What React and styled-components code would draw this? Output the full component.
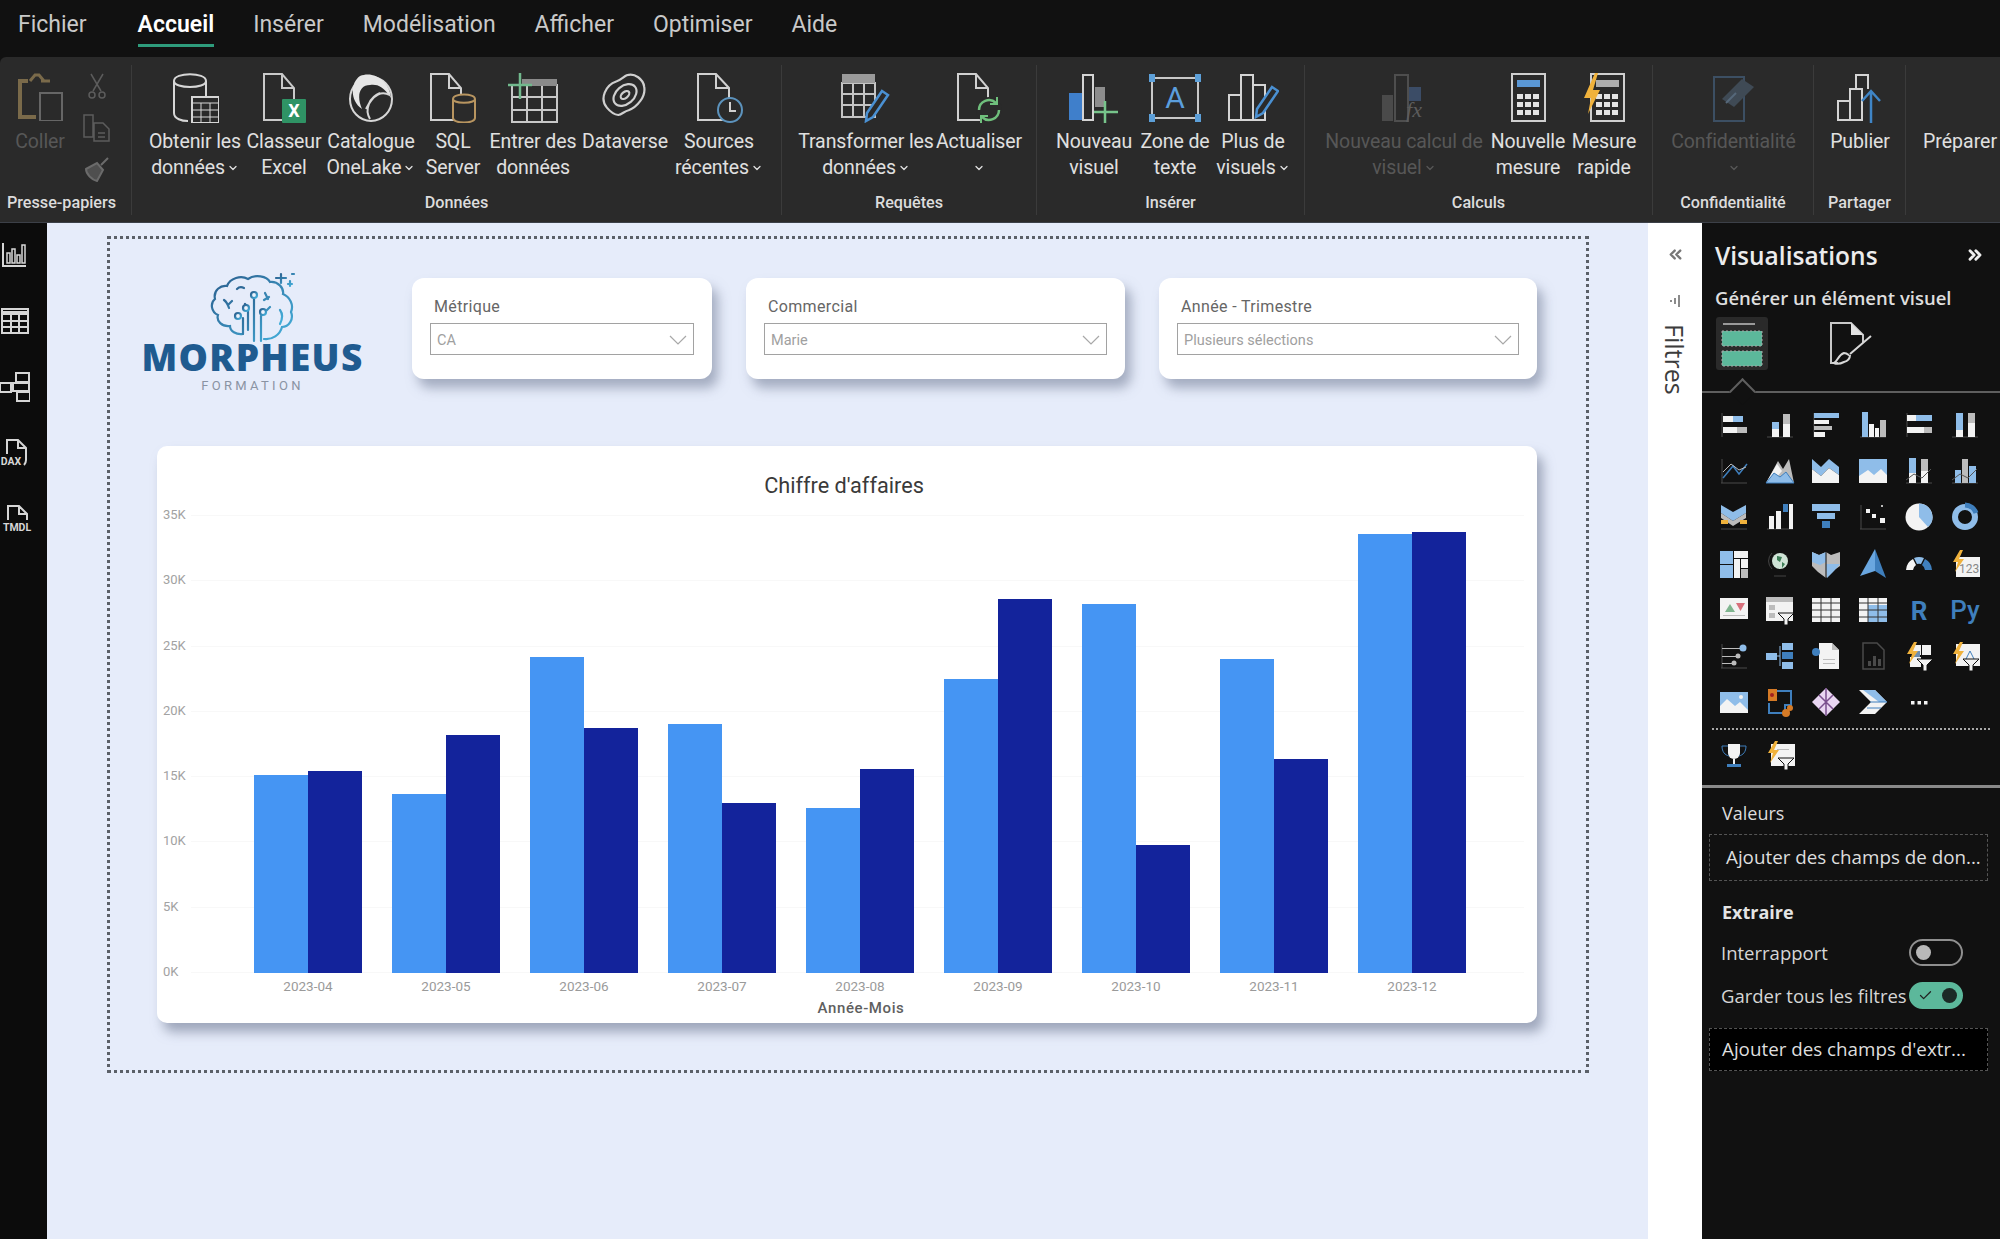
import styled, { createGlobalStyle } from "styled-components";
import { Check, ChevronDown, ChevronsLeft, ChevronsRight } from "lucide-react";

const W = "#f3f3f3";
const B = "#8fbde9";
const G = "#bcbcbc";
const D = "#3f7fbd";
const Y = "#f0b23c";
const L = "#d6d6d6";
const AX = "#4a4a4a";

const months = [
    { label: "2023-04", ca: 15150, prev: 15500 },
    { label: "2023-05", ca: 13700, prev: 18200 },
    { label: "2023-06", ca: 24200, prev: 18750 },
    { label: "2023-07", ca: 19060, prev: 13000 },
    { label: "2023-08", ca: 12600, prev: 15650 },
    { label: "2023-09", ca: 22500, prev: 28650 },
    { label: "2023-10", ca: 28250, prev: 9800 },
    { label: "2023-11", ca: 24050, prev: 16400 },
    { label: "2023-12", ca: 33600, prev: 33800 },
];
const ticks = ["35K", "30K", "25K", "20K", "15K", "10K", "5K", "0K"];
const PLOT_H = 457;

// petits helpers pour les icones
const b = (x, y, w, h, f) => <rect x={x} y={y} width={w} height={h} fill={f} />;
const axisL = <path d="M3 3v24" stroke={AX} fill="none" />;
const axisB = <path d="M2 27h26" stroke={AX} fill="none" />;
const bolt = <path d="M10 1 3 13h5l-3 10 9-13H9l4-9z" fill={Y} />;
const funnel = <path d="M13 18h16l-6 6v6h-4v-6z" fill={W} stroke="#111" strokeWidth="1" />;

const gridIcons = [
    <>{axisL}{b(4, 6, 10, 6, W)}{b(14, 6, 10, 6, B)}{b(4, 17, 14, 6, W)}{b(18, 17, 10, 6, G)}</>,
    <>{axisB}{b(7, 12, 7, 7, B)}{b(7, 19, 7, 8, W)}{b(18, 4, 7, 10, G)}{b(18, 14, 7, 13, W)}</>,
    <>{axisL}{b(3, 3, 25, 5, B)}{b(3, 10, 15, 4, W)}{b(3, 16, 18, 4, G)}{b(3, 22, 11, 5, W)}</>,
    <>{axisB}{b(4, 2, 6, 25, B)}{b(11, 14, 5, 13, W)}{b(17, 18, 4, 9, W)}{b(22, 10, 6, 17, G)}</>,
    <>{axisL}{b(3, 5, 9, 6, W)}{b(12, 5, 16, 6, B)}{b(3, 17, 17, 6, W)}{b(20, 17, 8, 6, G)}</>,
    <>{axisB}{b(6, 3, 7, 17, B)}{b(6, 20, 7, 7, W)}{b(18, 3, 7, 10, G)}{b(18, 13, 7, 14, W)}</>,
    <>{axisL}{axisB}<path d="M4 22 14 10l6 8 8-10" stroke={D} fill="none" strokeWidth="1.5" /><path d="M4 16l8-8 8 6 7-3" stroke={G} fill="none" /></>,
    <><path d="M1 27 13 5l5 8 6-10 5 24z" fill={G} /><path d="M1 27 12 8l5 7-5 6z" fill={W} /><path d="M1 27l8-10 6 4 6-5 8 11z" fill={B} stroke={D} /></>,
    <><path d="M1 3l9 8 8-8 10 8v8L18 12l-8 8-9-7z" fill={B} /><path d="M1 13l9 7 8-8 10 7v8H1z" fill={W} /></>,
    <>{b(1, 3, 28, 24, B)}<path d="M1 27v-7l9-6 6 5 7-6 6 6v8z" fill={W} /></>,
    <>{axisB}{b(5, 2, 7, 25, B)}{b(5, 17, 7, 10, W)}{b(17, 3, 7, 12, G)}{b(17, 15, 7, 12, W)}<path d="M2 24l8-6 8 4 9-9" stroke="#555" fill="none" /></>,
    <>{axisB}{b(5, 14, 6, 13, B)}{b(12, 3, 6, 24, G)}{b(19, 10, 7, 17, B)}<path d="M2 24l8-6 8 4 9-9" stroke="#555" fill="none" /></>,
    <>{axisB}<path d="M2 3l12 7 13-7v8l-13 8L2 11z" fill={B} /><path d="M2 11l12 8 13-8v5L14 24 2 16z" fill={G} />{b(2, 18, 7, 4, Y)}{b(21, 18, 7, 4, Y)}</>,
    <>{axisB}{b(4, 14, 5, 13, W)}{b(11, 9, 5, 18, W)}{b(18, 2, 5, 8, D)}{b(24, 2, 4, 25, W)}</>,
    <>{b(1, 2, 28, 7, B)}{b(6, 11, 18, 6, B)}{b(11, 19, 8, 7, D)}</>,
    <>{axisL}{axisB}{b(8, 7, 4, 4, W)}{b(14, 12, 4, 4, W)}{b(22, 16, 5, 5, W)}{b(23, 3, 2, 2, G)}</>,
    <><circle cx="15" cy="15" r="13.5" fill={W} /><path d="M15 15V1.5a13.5 13.5 0 0 1 9 23.5z" fill={B} /></>,
    <><circle cx="15" cy="15" r="10" fill="none" stroke={B} strokeWidth="6" /><path d="M15 3a12 12 0 0 1 11 8" fill="none" stroke={D} strokeWidth="5" /></>,
    <>{b(1, 2, 13, 13, B)}{b(1, 16, 13, 13, B)}{b(15, 2, 14, 7, W)}{b(15, 10, 6, 19, W)}{b(22, 10, 7, 9, W)}{b(22, 20, 7, 9, G)}</>,
    <><circle cx="15" cy="12" r="8" fill="#cfe3d6" /><path d="M12 7l5 1-2 5-3-2zM17 13l3 2-3 4z" fill="#3c7d55" /><path d="M7 4a11 11 0 0 0 0 16M9 27h12" stroke="#444" fill="none" /></>,
    <><path d="M1 3l7 3 7-3 5 3 9-3v14l-7 5-7 7-8-6-6-6z" fill={G} /><path d="M1 3l7 3 7-3v10l-6 3-8-3zM15 15l14 0-6 7-7 7z" fill={B} /><path d="M15 3v26" stroke="#111" /></>,
    <><path d="M17 0l11 29-11-7z" fill={D} /><path d="M17 0 2 27l15-5z" fill="#6aa7e0" /></>,
    <><path d="M2 21a13 13 0 0 1 7-11l3 6a7 7 0 0 0-3 5z" fill={W} /><path d="M10 9a13 13 0 0 1 10 0l-3 6a7 7 0 0 0-4 0z" fill={B} /><path d="M21 10a13 13 0 0 1 7 11h-7a7 7 0 0 0-3-5z" fill={D} /></>,
    <>{b(6, 8, 24, 20, W)}<text x="9" y="24" fontSize="12" fill="#888" fontFamily="Roboto, sans-serif">123</text>{bolt}</>,
    <>{b(1, 3, 28, 21, W)}<path d="M6 17l5-8 5 8z" fill="#7fb58f" /><path d="M17 8h9l-4.500 8z" fill="#d8707c" />{b(4, 20, 22, 1, G)}</>,
    <>{b(1, 2, 27, 24, W)}{b(1, 2, 27, 5, G)}{b(4, 10, 6, 5, G)}{b(4, 18, 6, 5, G)}{funnel}</>,
    <>{b(1, 3, 28, 24, W)}{[8, 15, 22].map((y) => <path key={y} d={`M1 ${y}h28`} stroke="#333" />)}{[10, 20].map((x) => <path key={x} d={`M${x} 3v24`} stroke="#333" />)}</>,
    <>{b(1, 3, 28, 24, W)}{b(10, 10, 19, 17, B)}{[8, 15, 22].map((y) => <path key={y} d={`M1 ${y}h28`} stroke="#333" />)}{[10, 20].map((x) => <path key={x} d={`M${x} 3v24`} stroke="#333" />)}</>,
    <text x="15" y="25" fontSize="26" fontWeight="700" textAnchor="middle" fill={D} fontFamily="Roboto, sans-serif">R</text>,
    <text x="15" y="24" fontSize="26" fontWeight="500" textAnchor="middle" fill={D} fontFamily="Roboto, sans-serif">Py</text>,
    <>{axisL}{b(3, 7, 18, 1, G)}{b(3, 15, 14, 1, G)}{b(3, 22, 10, 1, G)}<circle cx="24" cy="7" r="3.500" fill={B} /><circle cx="19" cy="15" r="2.500" fill={G} /><circle cx="15" cy="22" r="2.500" fill={G} />{axisB}</>,
    <>{b(1, 12, 11, 7, B)}{b(17, 2, 11, 7, B)}{b(17, 11, 11, 7, D)}{b(17, 21, 11, 7, B)}<path d="M12 15h3M15 5v20" stroke={B} fill="none" /></>,
    <><path d="M8 2h13l7 7v19H8z" fill={W} /><path d="M21 2v7h7" fill={G} /><circle cx="5" cy="11" r="4" fill={D} />{b(12, 18, 12, 1, G)}{b(12, 22, 12, 1, G)}</>,
    <><path d="M5 2h14l7 7v19H5z" fill="none" stroke="#4a4a4a" strokeWidth="1.5" />{b(10, 20, 3, 5, "#4a4a4a")}{b(15, 15, 3, 10, "#4a4a4a")}{b(20, 18, 3, 7, "#4a4a4a")}</>,
    <>{b(8, 4, 9, 10, W)}{b(18, 4, 9, 10, W)}{b(6, 16, 11, 10, W)}{b(8, 10, 8, 6, "#6d8db0")}{bolt}{funnel}</>,
    <>{b(6, 3, 24, 22, W)}<path d="M15 20l5-10 5 10" stroke={D} fill="none" />{bolt}{funnel}</>,
    <>{b(1, 5, 28, 21, B)}<path d="M1 26v-7l7-7 8 7 5-4 8 8v3z" fill={W} /><circle cx="22" cy="10" r="2" fill={W} /></>,
    <><path d="M3 2h9v12H3z" fill="#d57a26" /><circle cx="7" cy="8" r="2" fill="#a02020" /><path d="M12 4h14v14h-6v8H4V16" fill="none" stroke={D} strokeWidth="2" /><circle cx="25" cy="21" r="3" fill="#d57a26" /><circle cx="21" cy="26" r="4" fill="#d57a26" /></>,
    <><path d="M15 1l14 14-14 14L1 15z" fill="#e9d6f2" /><path d="M15 1v28M8 8l14 14M22 8 8 22" stroke="#7a4f8e" strokeWidth="1.500" /></>,
    <><path d="M1 3h16l12 12-12 12H1l12-12z" fill={W} /><path d="M5 3h12l12 12h-8z" fill={B} /><path d="M12 15h17M9 21h14" stroke={D} /></>,
    <>{b(7, 14, 3.5, 3.5, W)}{b(13.5, 14, 3.5, 3.5, W)}{b(20, 14, 3.5, 3.5, W)}</>,
];

const extraIcons = [
    <><path d="M9 4h12v9a6 6 0 0 1-12 0z" fill={W} /><path d="M9 6H3c0 6 3 9 7 10M21 6h6c0 6-3 9-7 10" fill="none" stroke={D} /><path d="M14 19h2v5h-2z" fill={W} /><path d="M8 24h14v3H8z" fill={D} /></>,
    <>{b(6, 4, 24, 22, W)}{b(12, 9, 12, 1, G)}{bolt}{funnel}</>,
];

function Svg({ w, h, vb, children }) {
    return (
        <svg width={w} height={h} viewBox={vb || `0 0 ${w} ${h}`} fill="none">
            {children}
        </svg>
    );
}

const textFont = "Roboto, sans-serif";

const ClipboardIcon = () => (
    <Svg w={46} h={48}>
        <path d="M11 8H3v36h16" stroke="#7a6a4a" strokeWidth="4" />
        <path d="M33 8h-9M13 8l5-6h4l5 6" stroke="#7a6a4a" strokeWidth="3" />
        <path d="M23 20h22v28H23z" stroke="#666" strokeWidth="2" fill="#2a2a2a" />
    </Svg>
);
const ScissorsIcon = () => (
    <Svg w={18} h={26}>
        <path d="M3 1l10 17M15 1 5 18" stroke="#5c5c5c" strokeWidth="1.500" />
        <circle cx="4" cy="22" r="3" stroke="#5c5c5c" strokeWidth="1.500" />
        <circle cx="14" cy="22" r="3" stroke="#5c5c5c" strokeWidth="1.500" />
    </Svg>
);
const CopyIcon = () => (
    <Svg w={27} h={28}>
        <path d="M1 1h9v22H1zM11 9h9l6 6v12H11zM15 19h7M15 23h7" stroke="#5c5c5c" strokeWidth="1.500" />
    </Svg>
);
const BrushIcon = () => (
    <Svg w={26} h={25}>
        <path d="M17 8 24 1M2 12l11-6 6 7-6 11c-5-1-11-7-11-12z" stroke="#6b6b6b" strokeWidth="2" fill="#4f4f4f" />
    </Svg>
);
const GetDataIcon = () => (
    <Svg w={47} h={50}>
        <path d="M2 8c0-9 32-9 32 0v18M2 8c0 8 32 8 32 0M2 8v32c0 6 8 8 14 8" stroke={L} strokeWidth="2" />
        <path d="M20 24h27v26H20z" fill="#2a2a2a" stroke={L} strokeWidth="2" />
        <path d="M20 30h27M29 30v20M38 30v20M20 37h27M20 44h27" stroke={L} />
    </Svg>
);
const ExcelIcon = () => (
    <Svg w={44} h={50}>
        <path d="M2 1h18l12 14v32H2zM20 1v14h12" stroke="#c9c9c9" strokeWidth="2" />
        <rect x="20" y="26" width="24" height="24" rx="1" fill="#2f9365" />
        <text x="32" y="44" fontSize="18" fontWeight="700" fill="#fff" textAnchor="middle" fontFamily={textFont}>X</text>
    </Svg>
);
const OneLakeIcon = () => (
    <Svg w={46} h={50}>
        <ellipse cx="23" cy="26" rx="21" ry="22" stroke={L} strokeWidth="2" />
        <path d="M12 3c14-6 30 6 31 22-8-12-14-14-21-13C12 12 8 22 14 36 2 28 2 10 12 3z" fill="#e6e6e6" />
        <path d="M18 36c8-16 16-18 24-14M22 46c-6-10 0-22 10-26" stroke={L} strokeWidth="2" />
    </Svg>
);
const SqlIcon = () => (
    <Svg w={48} h={50}>
        <path d="M2 1h18l12 14v32H2zM20 1v14h12" stroke="#d0d0d0" strokeWidth="2" />
        <path d="M24 26c0-6 22-6 22 0v19c0 6-22 6-22 0z" fill="#2a2a2a" stroke="#b89560" strokeWidth="2" />
        <path d="M24 26c0 5 22 5 22 0" stroke="#b89560" strokeWidth="2" />
    </Svg>
);
const EnterDataIcon = () => (
    <Svg w={50} h={50}>
        <path d="M4 12h45v37H4zM19 12v37M34 12v37M4 24h45M4 37h45" stroke="#c8c8c8" strokeWidth="2" />
        <path d="M14 6h35v7H14z" fill="#8a8a8a" />
        <path d="M12 0v26M0 12h24" stroke="#71b98d" strokeWidth="2.500" />
    </Svg>
);
const DataverseIcon = () => (
    <Svg w={48} h={44}>
        <g stroke="#cfcfcf" strokeWidth="2.200" transform="rotate(-40 24 22)">
            <path d="M2 20c0-12 14-18 24-14 4 2 8 1 12 2 8 3 10 14 6 20-5 9-19 11-27 8-4-2-8-1-11-3-3-3-4-8-4-13z" />
            <ellipse cx="24" cy="22" rx="13" ry="9" />
            <ellipse cx="24" cy="22" rx="5" ry="3" />
        </g>
    </Svg>
);
const RecentIcon = () => (
    <Svg w={47} h={50}>
        <path d="M2 1h18l13 14v32H2zM20 1v14h13" stroke="#d0d0d0" strokeWidth="2" />
        <circle cx="34" cy="37" r="12" fill="#2a2a2a" stroke="#5c93bd" strokeWidth="2" />
        <path d="M34 29v9h6" stroke="#d0d0d0" strokeWidth="2" />
    </Svg>
);
const pencil = (x, y) => (
    <path transform={`translate(${x} ${y})`} d="M17 0l6 4L8 26l-7 4 1-8z" fill="#2a2a2a" stroke="#4a90d2" strokeWidth="2.500" />
);
const TransformIcon = () => (
    <Svg w={50} h={50}>
        <path d="M1 10h33v34H1zM12 10v34M23 10v34M1 21h33M1 32h33" stroke="#c4c4c4" strokeWidth="2" />
        <path d="M1 1h33v9H1z" fill="#9a9a9a" />
        {pencil(24, 18)}
    </Svg>
);
const RefreshIcon = () => (
    <Svg w={46} h={50}>
        <path d="M2 1h18l12 14v32H2zM20 1v14h12" stroke="#d0d0d0" strokeWidth="2" />
        <circle cx="33" cy="37" r="13" fill="#2a2a2a" />
        <path d="M23 37a10 10 0 0 1 17-7M43 37a10 10 0 0 1-17 7" stroke="#6fbf7c" strokeWidth="2.500" />
        <path d="M41 24v7h-7M25 50v-7h7" stroke="#6fbf7c" strokeWidth="2" />
    </Svg>
);
const NewVisualIcon = () => (
    <Svg w={50} h={50}>
        <path d="M0 20h13v27H0z" fill="#3f7fcb" />
        <path d="M14 2h10v45H14z" stroke="#d4d4d4" strokeWidth="2" />
        <path d="M26 14h10v20H26z" fill="#8d8d8d" />
        <path d="M36 28v22M25 39h24" stroke="#77c48b" strokeWidth="2.500" />
    </Svg>
);
const TextBoxIcon = () => (
    <Svg w={54} h={50}>
        <path d="M4 5h46v40H4z" stroke="#c8c8c8" strokeWidth="2" />
        <path d="M1 1h6v8H1zM47 1h6v8h-6zM1 41h6v8H1zM47 41h6v8h-6z" fill="#5c9fd8" />
        <text x="27" y="35" fontSize="30" fill="#5b9edc" textAnchor="middle" fontFamily={textFont}>A</text>
    </Svg>
);
const MoreVisualsIcon = () => (
    <Svg w={51} h={50}>
        <path d="M1 22h12v25H1zM13 2h12v45H13zM25 12h12v35H25z" stroke="#d4d4d4" strokeWidth="2" fill="#2a2a2a" />
        {pencil(27, 14)}
    </Svg>
);
const NewCalcIcon = () => (
    <Svg w={46} h={50}>
        <path d="M1 22h11v26H1z" fill="#4a4a4a" />
        <path d="M14 2h13v46H14z" stroke="#4e4e4e" strokeWidth="2" />
        <path d="M28 14h12v14H28z" fill="#3b4c66" />
        <text x="33" y="44" fontSize="22" fontStyle="italic" fill="#5c5c5c" textAnchor="middle" fontFamily="Liberation Serif, serif">fx</text>
    </Svg>
);
const Calculator = ({ color, x = 1 }) => (
    <g transform={`translate(${x} 1)`}>
        <path d="M0 0h33v47H0z" stroke="#cfcfcf" strokeWidth="2" />
        <rect x="5" y="6" width="23" height="7" fill={color} />
        {[20, 28, 36].map((y) =>
            [5, 13, 21].map((c) => <rect key={`${y}-${c}`} x={c} y={y} width="6" height="5" fill="#e4e4e4" />)
        )}
    </g>
);
const MeasureIcon = () => (
    <Svg w={35} h={50}>
        <Calculator color="#5a97d5" />
    </Svg>
);
const QuickMeasureIcon = () => (
    <Svg w={42} h={50}>
        <Calculator color="#aeaeae" x={8} />
        <path d="M12 0 1 25h7L5 41l12-24h-7l5-17z" fill={Y} />
    </Svg>
);
const PrivacyIcon = () => (
    <Svg w={44} h={50}>
        <path d="M2 4h30v44H2z" stroke="#3c4f63" strokeWidth="2" />
        <path d="M10 26 30 6l12 8-20 20z" fill="#3f4a55" />
        <path d="M14 30l10-10" stroke="#56687a" strokeWidth="2" />
    </Svg>
);
const PublishIcon = () => (
    <Svg w={46} h={50}>
        <path d="M1 28h12v19H1zM13 16h12v31H13zM19 16V2h12v14" stroke="#d4d4d4" strokeWidth="2" />
        <path d="M34 50V18M25 28l9-10 9 10" stroke="#3f85c6" strokeWidth="2.500" />
    </Svg>
);

const railIcons = [
    <Svg w={30} h={26}>
        <path d="M3 1v23h23" stroke={L} strokeWidth="2" />
        <path d="M7 11h3v10H7zM12 7h3v14h-3zM17 13h3v8h-3zM22 3h3v18h-3z" stroke={L} strokeWidth="1.500" />
    </Svg>,
    <Svg w={30} h={26}>
        <rect x="2" y="1" width="26" height="24" stroke={L} strokeWidth="2" />
        <path d="M2 5h26" stroke={L} strokeWidth="4" />
        <path d="M2 13h26M2 19h26M11 7v18M19 7v18" stroke={L} strokeWidth="2" />
    </Svg>,
    <Svg w={30} h={30}>
        <path d="M0 11h11v9H0zM16 1h13v9H16zM13 11h16v8H13zM17 20h13v9H17zM11 15h2" stroke={L} strokeWidth="2" />
    </Svg>,
    <Svg w={30} h={28}>
        <path d="M7 15V1h11l8 8v12c0 2-1 4-2 5M18 1v8h8" stroke={L} strokeWidth="2" />
        <text x="11" y="26" fontSize="10.500" fontWeight="700" fill={L} textAnchor="middle" fontFamily={textFont}>DAX</text>
    </Svg>,
    <Svg w={34} h={28}>
        <path d="M8 15V1h11l8 8v6M19 1v8h8" stroke={L} strokeWidth="2" />
        <text x="17" y="26" fontSize="10.500" fontWeight="700" fill={L} textAnchor="middle" fontFamily={textFont}>TMDL</text>
    </Svg>,
];

const BrainLogo = () => (
    <svg width="86" height="72" viewBox="0 0 86 72" fill="none">
        <defs>
            <linearGradient id="brainStroke" x1="0" y1="0" x2="1" y2="1">
                <stop offset="0" stopColor="#2a5d8c" />
                <stop offset="1" stopColor="#45b0dc" />
            </linearGradient>
        </defs>
        <g stroke="url(#brainStroke)" strokeWidth="2.200" strokeLinecap="round">
            <path d="M33 62C26 63 20 59 20 54 12 55 6 49 8 43 1 40 0 31 5 27 3 18 11 13 17 14 20 6 31 3 38 7 45 2 57 4 60 10 68 9 74 16 73 22 80 25 84 33 81 40 84 47 79 55 72 55 70 63 62 68 54 67" />
            <path d="M14 28c3 2 4 5 5 8M18 33l4-4M27 17c2-2 5-2 7-1M59 25l-5 3M55 21l3 6M70 38c3 4 2 10 0 14" />
            <path d="M44 69V26M51 69V44M33 62V46M38 58V36l-3-4M51 44l9-9" />
            <circle cx="44" cy="23" r="3" fill="#eef3fc" />
            <circle cx="36" cy="36" r="3" fill="#eef3fc" />
            <circle cx="28" cy="44" r="3" fill="#eef3fc" />
            <circle cx="53" cy="40" r="3" fill="#eef3fc" />
            <path d="M71 2v9M66 6h10M80 9v5M78 12h4M82 2h2" />
        </g>
    </svg>
);

const SmallChevron = () => <ChevronDown size={12} strokeWidth={2.6} />;

const ribbon = [
    {
        title: "Données",
        width: 650,
        pad: 14,
        items: [
            { w: 98, icon: <GetDataIcon />, lines: ["Obtenir les", "données"], caret: true },
            { w: 80, icon: <ExcelIcon />, lines: ["Classeur", "Excel"] },
            { w: 94, icon: <OneLakeIcon />, lines: ["Catalogue", "OneLake"], caret: true },
            { w: 70, icon: <SqlIcon />, lines: ["SQL", "Server"] },
            { w: 90, icon: <EnterDataIcon />, lines: ["Entrer des", "données"] },
            { w: 94, icon: <DataverseIcon />, lines: ["Dataverse"] },
            { w: 94, icon: <RecentIcon />, lines: ["Sources", "récentes"], caret: true },
        ],
    },
    {
        title: "Requêtes",
        width: 255,
        pad: 15,
        items: [
            { w: 138, icon: <TransformIcon />, lines: ["Transformer les", "données"], caret: true },
            { w: 88, icon: <RefreshIcon />, lines: ["Actualiser", ""], caret: true },
        ],
    },
    {
        title: "Insérer",
        width: 268,
        pad: 17,
        items: [
            { w: 80, icon: <NewVisualIcon />, lines: ["Nouveau", "visuel"] },
            { w: 82, icon: <TextBoxIcon />, lines: ["Zone de", "texte"] },
            { w: 74, icon: <MoreVisualsIcon />, lines: ["Plus de", "visuels"], caret: true },
        ],
    },
    {
        title: "Calculs",
        width: 348,
        pad: 19,
        items: [
            { w: 160, icon: <NewCalcIcon />, lines: ["Nouveau calcul de", "visuel"], caret: true, off: true },
            { w: 88, icon: <MeasureIcon />, lines: ["Nouvelle", "mesure"] },
            { w: 64, icon: <QuickMeasureIcon />, lines: ["Mesure", "rapide"] },
        ],
    },
    {
        title: "Confidentialité",
        width: 161,
        pad: 16,
        items: [{ w: 129, icon: <PrivacyIcon />, lines: ["Confidentialité", ""], caret: true, off: true }],
    },
    {
        title: "Partager",
        width: 92,
        pad: 15,
        items: [{ w: 62, icon: <PublishIcon />, lines: ["Publier"] }],
    },
];

const slicers = [
    { title: "Métrique", value: "CA", w: 300 },
    { title: "Commercial", value: "Marie", w: 379 },
    { title: "Année - Trimestre", value: "Plusieurs sélections", w: 378 },
];

function RibbonButton({ item }) {
    return (
        <Item $w={item.w} $off={item.off}>
            <IconSlot>{item.icon}</IconSlot>
            {item.lines.map((line, i) => (
                <ItemLine key={i}>
                    {line}
                    {item.caret && i === 1 && <SmallChevron />}
                </ItemLine>
            ))}
        </Item>
    );
}

export default function App() {
    return (
        <Page>
            <GlobalStyle />
            <MenuBar>
                {["Fichier", "Accueil", "Insérer", "Modélisation", "Afficher", "Optimiser", "Aide"].map((tab) => (
                    <MenuTab key={tab} $active={tab === "Accueil"}>{tab}</MenuTab>
                ))}
            </MenuBar>

            <Ribbon>
                <RibbonGroup $w={132}>
                    <GroupItems>
                        <Item $w={80} $off>
                            <IconSlot><ClipboardIcon /></IconSlot>
                            <ItemLine>Coller</ItemLine>
                        </Item>
                        <SmallTools>
                            <ScissorsIcon />
                            <CopyIcon />
                            <BrushIcon />
                        </SmallTools>
                    </GroupItems>
                    <GroupTitle $shift={8}>Presse-papiers</GroupTitle>
                </RibbonGroup>
                {ribbon.map((group) => (
                    <RibbonGroup key={group.title} $w={group.width}>
                        <GroupItems $pad={group.pad}>
                            {group.items.map((item) => (
                                <RibbonButton key={item.lines[0]} item={item} />
                            ))}
                        </GroupItems>
                        <GroupTitle>{group.title}</GroupTitle>
                    </RibbonGroup>
                ))}
                <RibbonGroup $w={94} $last>
                    <GroupItems $pad={17}>
                        <Prepare>Préparer</Prepare>
                    </GroupItems>
                </RibbonGroup>
            </Ribbon>

            <Body>
                <Rail>
                    {railIcons.map((icon, i) => (
                        <RailIcon key={i}>{icon}</RailIcon>
                    ))}
                </Rail>

                <Canvas>
                    <Frame>
                        <TopRow>
                            <Logo>
                                <BrainLogo />
                                <LogoName>MORPHEUS</LogoName>
                                <LogoSub>FORMATION</LogoSub>
                            </Logo>
                            <Slicers>
                                {slicers.map((s) => (
                                    <Slicer key={s.title} $w={s.w}>
                                        <SlicerTitle>{s.title}</SlicerTitle>
                                        <Dropdown>
                                            <DropdownValue>{s.value}</DropdownValue>
                                            <svg width="18" height="10" viewBox="0 0 18 10" fill="none">
                                                <path d="M1 1l8 8 8-8" stroke="#a8a8a8" strokeWidth="1.200" />
                                            </svg>
                                        </Dropdown>
                                    </Slicer>
                                ))}
                            </Slicers>
                        </TopRow>

                        <ChartCard>
                            <ChartTitle>Chiffre d'affaires</ChartTitle>
                            <ChartBody>
                                <YAxis>
                                    {ticks.map((t) => <Tick key={t}>{t}</Tick>)}
                                </YAxis>
                                <ChartMain>
                                    <Plot>
                                        {months.map((m) => (
                                            <BarGroup key={m.label}>
                                                <Bar $color="#4595f3" style={{ height: (m.ca / 35000) * PLOT_H }} />
                                                <Bar $color="#13239b" style={{ height: (m.prev / 35000) * PLOT_H }} />
                                            </BarGroup>
                                        ))}
                                    </Plot>
                                    <XLabels>
                                        {months.map((m) => <XLabel key={m.label}>{m.label}</XLabel>)}
                                    </XLabels>
                                    <XTitle>Année-Mois</XTitle>
                                </ChartMain>
                            </ChartBody>
                        </ChartCard>
                    </Frame>
                </Canvas>

                <FilterPane>
                    <ChevronsLeft size={19} strokeWidth={3} color="#777" />
                    <svg width="14" height="14" viewBox="0 0 14 14" fill="none">
                        <path d="M11 1v12M7 4v6M3 6v2" stroke="#666" strokeWidth="1.500" />
                    </svg>
                    <FilterLabel>Filtres</FilterLabel>
                </FilterPane>

                <VisPane>
                    <PaneHead>
                        <PaneTitle>Visualisations</PaneTitle>
                        <ChevronsRight size={20} strokeWidth={3.4} color="#eee" />
                    </PaneHead>
                    <PaneSub>Générer un élément visuel</PaneSub>
                    <ModeRow>
                        <ModeButton>
                            <svg width="42" height="46" viewBox="0 0 42 46" fill="none">
                                <path d="M2 3h32" stroke="#9a9a9a" strokeWidth="2" />
                                <rect x="1" y="10" width="40" height="15" fill="#5cb89b" stroke="#a8a8a8" strokeDasharray="2 2" />
                                <rect x="1" y="30" width="40" height="15" fill="#5cb89b" stroke="#a8a8a8" strokeDasharray="2 2" />
                            </svg>
                        </ModeButton>
                        <svg width="42" height="43" viewBox="0 0 42 43" fill="none">
                            <path d="M8 41H1V1h20l12 12v8" stroke="#c8c8c8" strokeWidth="2" />
                            <path d="M21 1v12h12" fill="#e2e2e2" />
                            <path d="M41 14 20 32M14 40c-4 2-8 2-10 1 4-2 4-8 10-10 4 0 6 4 6 2 0 3-2 6-6 7z" stroke="#d8d8d8" strokeWidth="2" />
                        </svg>
                    </ModeRow>
                    <Divider />
                    <IconGrid $top={9}>
                        {gridIcons.map((icon, i) => (
                            <GridCell key={i}><Svg w={30} h={30}>{icon}</Svg></GridCell>
                        ))}
                    </IconGrid>
                    <DottedRule />
                    <IconGrid $top={2}>
                        {extraIcons.map((icon, i) => (
                            <GridCell key={i}><Svg w={30} h={30}>{icon}</Svg></GridCell>
                        ))}
                    </IconGrid>
                    <SolidRule />
                    <FieldLabel>Valeurs</FieldLabel>
                    <DropZone>Ajouter des champs de don...</DropZone>
                    <FieldHead>Extraire</FieldHead>
                    <ToggleRow $top={14}>
                        Interrapport
                        <Toggle />
                    </ToggleRow>
                    <ToggleRow $top={13}>
                        Garder tous les filtres
                        <Toggle $on>
                            <Check size={15} strokeWidth={2} color="#222" />
                        </Toggle>
                    </ToggleRow>
                    <DropZone $dark>Ajouter des champs d'extr...</DropZone>
                </VisPane>
            </Body>
        </Page>
    );
}

const GlobalStyle = createGlobalStyle`
    html, body {
        margin: 0;
        padding: 0;
        background: #111;
    }
    * {
        box-sizing: border-box;
    }
`;

const Page = styled.div`
    width: 2000px;
    height: 1239px;
    overflow: hidden;
    display: flex;
    flex-direction: column;
    background: #111111;
    font-family: Roboto, "Open Sans", sans-serif;
    color: #e8e8e8;
`;

const MenuBar = styled.div`
    height: 57px;
    flex: none;
    display: flex;
    gap: 39px;
    padding: 12px 0 0 18px;
`;

const MenuTab = styled.div`
    height: 35px;
    line-height: 26px;
    font-size: 23px;
    color: ${(p) => (p.$active ? "#ffffff" : "#c9c9c9")};
    font-weight: ${(p) => (p.$active ? 600 : 400)};
    border-bottom: 3px solid ${(p) => (p.$active ? "#2e9c7c" : "transparent")};

    &:first-child {
        margin-right: 12px;
    }
`;

const Ribbon = styled.div`
    height: 166px;
    flex: none;
    display: flex;
    background: #2a2a2a;
    border-radius: 6px 0 0 0;
    border-bottom: 1px solid #3c4048;
`;

const RibbonGroup = styled.div`
    width: ${(p) => p.$w}px;
    flex: none;
    margin: 8px 0 7px;
    display: flex;
    flex-direction: column;
    border-right: ${(p) => (p.$last ? "none" : "1px solid #3b3b3b")};
`;

const GroupItems = styled.div`
    flex: 1;
    display: flex;
    padding-left: ${(p) => p.$pad || 0}px;
`;

const GroupTitle = styled.div`
    height: 24px;
    line-height: 24px;
    margin-left: ${(p) => (p.$shift ? "-" + p.$shift + "px" : "0")};
    font-size: 16.2px;
    font-weight: 500;
    text-align: center;
    white-space: nowrap;
    color: #dcdcdc;
`;

const Item = styled.div`
    width: ${(p) => p.$w}px;
    flex: none;
    display: flex;
    flex-direction: column;
    align-items: center;
    padding-top: 8px;
    color: ${(p) => (p.$off ? "#575757" : "#e0e0e0")};
`;

const IconSlot = styled.div`
    height: 50px;
    margin-bottom: 6px;
    display: flex;
    align-items: flex-start;
    justify-content: center;
`;

const ItemLine = styled.div`
    height: 26px;
    line-height: 26px;
    font-size: 19.5px;
    letter-spacing: -0.1px;
    white-space: nowrap;
    display: flex;
    align-items: center;
    gap: 2px;
`;

const SmallTools = styled.div`
    display: flex;
    flex-direction: column;
    align-items: center;
    gap: 15px;
    padding: 8px 0 0 3px;
    width: 30px;
`;

const Prepare = styled.div`
    padding-top: 64px;
    font-size: 19.5px;
    line-height: 26px;
    color: #e0e0e0;
    white-space: nowrap;
`;

const Body = styled.div`
    flex: 1;
    min-height: 0;
    display: flex;
`;

const Rail = styled.div`
    width: 47px;
    flex: none;
    background: #0c0c0c;
    display: flex;
    flex-direction: column;
    gap: 36px;
    padding-top: 17px;
    overflow: hidden;
`;

const RailIcon = styled.div`
    height: 30px;
    display: flex;
    align-items: center;
`;

const Canvas = styled.div`
    width: 1601px;
    flex: none;
    background: #e6ecfa;
    padding: 13px 0 0 60px;
`;

const Frame = styled.div`
    width: 1482px;
    height: 837px;
    border: 3px dotted #5b6068;
    padding-top: 39px;
`;

const TopRow = styled.div`
    height: 101px;
    display: flex;
`;

const Logo = styled.div`
    width: 302px;
    height: 101px;
    flex: none;
    margin-top: -6px;
    padding: 0 50px 0 33px;
    display: flex;
    flex-direction: column;
    align-items: center;

    svg {
        flex: none;
    }
`;

const LogoName = styled.div`
    flex: none;
    margin-top: -3px;
    font-family: "Open Sans", sans-serif;
    font-size: 37px;
    font-weight: 800;
    line-height: 32px;
    letter-spacing: 1.3px;
    color: #1f5b90;
    white-space: nowrap;
`;

const LogoSub = styled.div`
    flex: none;
    margin-top: 6px;
    font-size: 13px;
    line-height: 14px;
    letter-spacing: 3.3px;
    color: #8a93a3;
`;

const Slicers = styled.div`
    display: flex;
    gap: 34px;
`;

const Slicer = styled.div`
    width: ${(p) => p.$w}px;
    height: 101px;
    padding: 20px 18px 0;
    background: #ffffff;
    border-radius: 12px;
    box-shadow: 6px 9px 12px rgba(110, 120, 145, 0.55);
`;

const SlicerTitle = styled.div`
    height: 18px;
    line-height: 18px;
    padding-left: 4px;
    margin-bottom: 7px;
    font-size: 16px;
    letter-spacing: 0.35px;
    color: #666;
`;

const Dropdown = styled.div`
    height: 32px;
    padding: 2px 6px 0;
    display: flex;
    align-items: center;
    justify-content: space-between;
    border: 1.5px solid #a2a2a2;
`;

const DropdownValue = styled.span`
    font-size: 14.5px;
    color: #a0a0a0;
`;

const ChartCard = styled.div`
    width: 1380px;
    height: 577px;
    margin: 67px 0 0 47px;
    padding-top: 28px;
    background: #ffffff;
    border-radius: 10px;
    box-shadow: 6px 9px 12px rgba(110, 120, 145, 0.6);
    color: #555;
`;

const ChartTitle = styled.div`
    height: 24px;
    line-height: 24px;
    padding-right: 6px;
    text-align: center;
    font-size: 21.7px;
    color: #3a3a3a;
`;

const ChartBody = styled.div`
    margin-top: 10px;
    padding-left: 6px;
    display: flex;
`;

const YAxis = styled.div`
    width: 28px;
    height: 471px;
    flex: none;
    display: flex;
    flex-direction: column;
    justify-content: space-between;
`;

const Tick = styled.div`
    height: 14px;
    line-height: 14px;
    font-size: 13px;
    color: #a2a2a2;
`;

const ChartMain = styled.div`
    width: 1333px;
    padding-top: 7px;
`;

const Plot = styled.div`
    height: ${PLOT_H + 1}px;
    padding-left: 63px;
    display: flex;
    align-items: flex-end;
    gap: 30px;
    background: repeating-linear-gradient(
        to bottom,
        #f8f8f8 0,
        #f8f8f8 1px,
        transparent 1px,
        transparent ${PLOT_H / 7}px
    );
`;

const BarGroup = styled.div`
    width: 108px;
    flex: none;
    display: flex;
    align-items: flex-end;
`;

const Bar = styled.div`
    flex: 1;
    background: ${(p) => p.$color};
`;

const XLabels = styled.div`
    margin-top: 5px;
    padding-left: 63px;
    display: flex;
    gap: 30px;
`;

const XLabel = styled.div`
    width: 108px;
    flex: none;
    height: 16px;
    line-height: 16px;
    text-align: center;
    font-size: 13.5px;
    color: #9a9a9a;
`;

const XTitle = styled.div`
    margin-top: 6px;
    padding-left: 7px;
    height: 16px;
    line-height: 16px;
    text-align: center;
    font-size: 15px;
    font-weight: 500;
    letter-spacing: 0.6px;
    color: #5f5f5f;
`;

const FilterPane = styled.div`
    width: 54px;
    flex: none;
    background: #ffffff;
    display: flex;
    flex-direction: column;
    align-items: center;
    padding-top: 22px;
    gap: 30px;
`;

const FilterLabel = styled.div`
    writing-mode: vertical-rl;
    font-family: "Open Sans", sans-serif;
    font-size: 25px;
    line-height: 26px;
    color: #3c3c3c;
    margin-top: -14px;
`;

const VisPane = styled.div`
    flex: 1;
    min-width: 0;
    background: #111111;
    display: flex;
    flex-direction: column;
    padding-top: 16px;
    font-family: "Open Sans", sans-serif;
`;

const PaneHead = styled.div`
    height: 32px;
    padding: 0 15px 0 13px;
    display: flex;
    align-items: center;
    justify-content: space-between;
`;

const PaneTitle = styled.div`
    font-size: 24.5px;
    font-weight: 600;
    color: #ececec;
`;

const PaneSub = styled.div`
    margin-top: 15px;
    padding-left: 13px;
    height: 24px;
    line-height: 24px;
    font-size: 18.5px;
    font-weight: 600;
    color: #dedede;
    white-space: nowrap;
`;

const ModeRow = styled.div`
    margin-top: 7px;
    height: 53px;
    padding-left: 14px;
    display: flex;
    align-items: center;
    gap: 62px;
`;

const ModeButton = styled.div`
    width: 52px;
    height: 53px;
    background: #2a2a2a;
    border-radius: 3px;
    display: flex;
    align-items: center;
    justify-content: center;
`;

const Divider = styled.div`
    position: relative;
    height: 2px;
    margin-top: 21px;
    background: #5f5f5f;

    &::after {
        content: "";
        position: absolute;
        left: 31px;
        top: -9px;
        width: 17px;
        height: 17px;
        background: #111111;
        border-left: 2px solid #5f5f5f;
        border-top: 2px solid #5f5f5f;
        transform: rotate(45deg);
    }
`;

const IconGrid = styled.div`
    padding: ${(p) => p.$top}px 0 0 9px;
    display: grid;
    grid-template-columns: repeat(6, 46.2px);
    grid-auto-rows: 46.2px;
`;

const GridCell = styled.div`
    display: flex;
    align-items: center;
    justify-content: center;
`;

const DottedRule = styled.div`
    margin: 3px 10px 0;
    border-top: 2px dotted #a8a8a8;
`;

const SolidRule = styled.div`
    height: 3px;
    margin-top: 6px;
    background: #8a8a8a;
`;

const FieldLabel = styled.div`
    margin-top: 13px;
    padding-left: 20px;
    height: 24px;
    line-height: 24px;
    font-size: 18px;
    color: #dcdcdc;
`;

const DropZone = styled.div`
    margin: ${(p) => (p.$dark ? "17px" : "9px")} 12px 0 7px;
    height: ${(p) => (p.$dark ? "43px" : "47px")};
    padding-left: ${(p) => (p.$dark ? "12px" : "16px")};
    display: flex;
    align-items: center;
    border: 1.5px dashed #555;
    background: ${(p) => (p.$dark ? "#000" : "transparent")};
    font-size: 18.8px;
    color: #dedede;
    white-space: nowrap;
`;

const FieldHead = styled.div`
    margin-top: 19px;
    padding-left: 20px;
    height: 24px;
    line-height: 24px;
    font-size: 18px;
    font-weight: 700;
    color: #e4e4e4;
`;

const ToggleRow = styled.div`
    margin-top: ${(p) => p.$top}px;
    height: 30px;
    padding: 0 37px 0 19px;
    display: flex;
    align-items: center;
    justify-content: space-between;
    font-size: 18.5px;
    color: #d6d6d6;
    white-space: nowrap;
`;

const Toggle = styled.div`
    position: relative;
    width: 54px;
    height: 27px;
    flex: none;
    border-radius: 14px;
    border: 2px solid ${(p) => (p.$on ? "#5cb89b" : "#8f8f8f")};
    background: ${(p) => (p.$on ? "#5cb89b" : "transparent")};
    display: flex;
    align-items: center;
    padding-left: 7px;

    &::after {
        content: "";
        position: absolute;
        top: 4px;
        left: ${(p) => (p.$on ? "31px" : "5px")};
        width: 15px;
        height: 15px;
        border-radius: 50%;
        background: ${(p) => (p.$on ? "#1c2a26" : "#b8b8b8")};
    }
`;
